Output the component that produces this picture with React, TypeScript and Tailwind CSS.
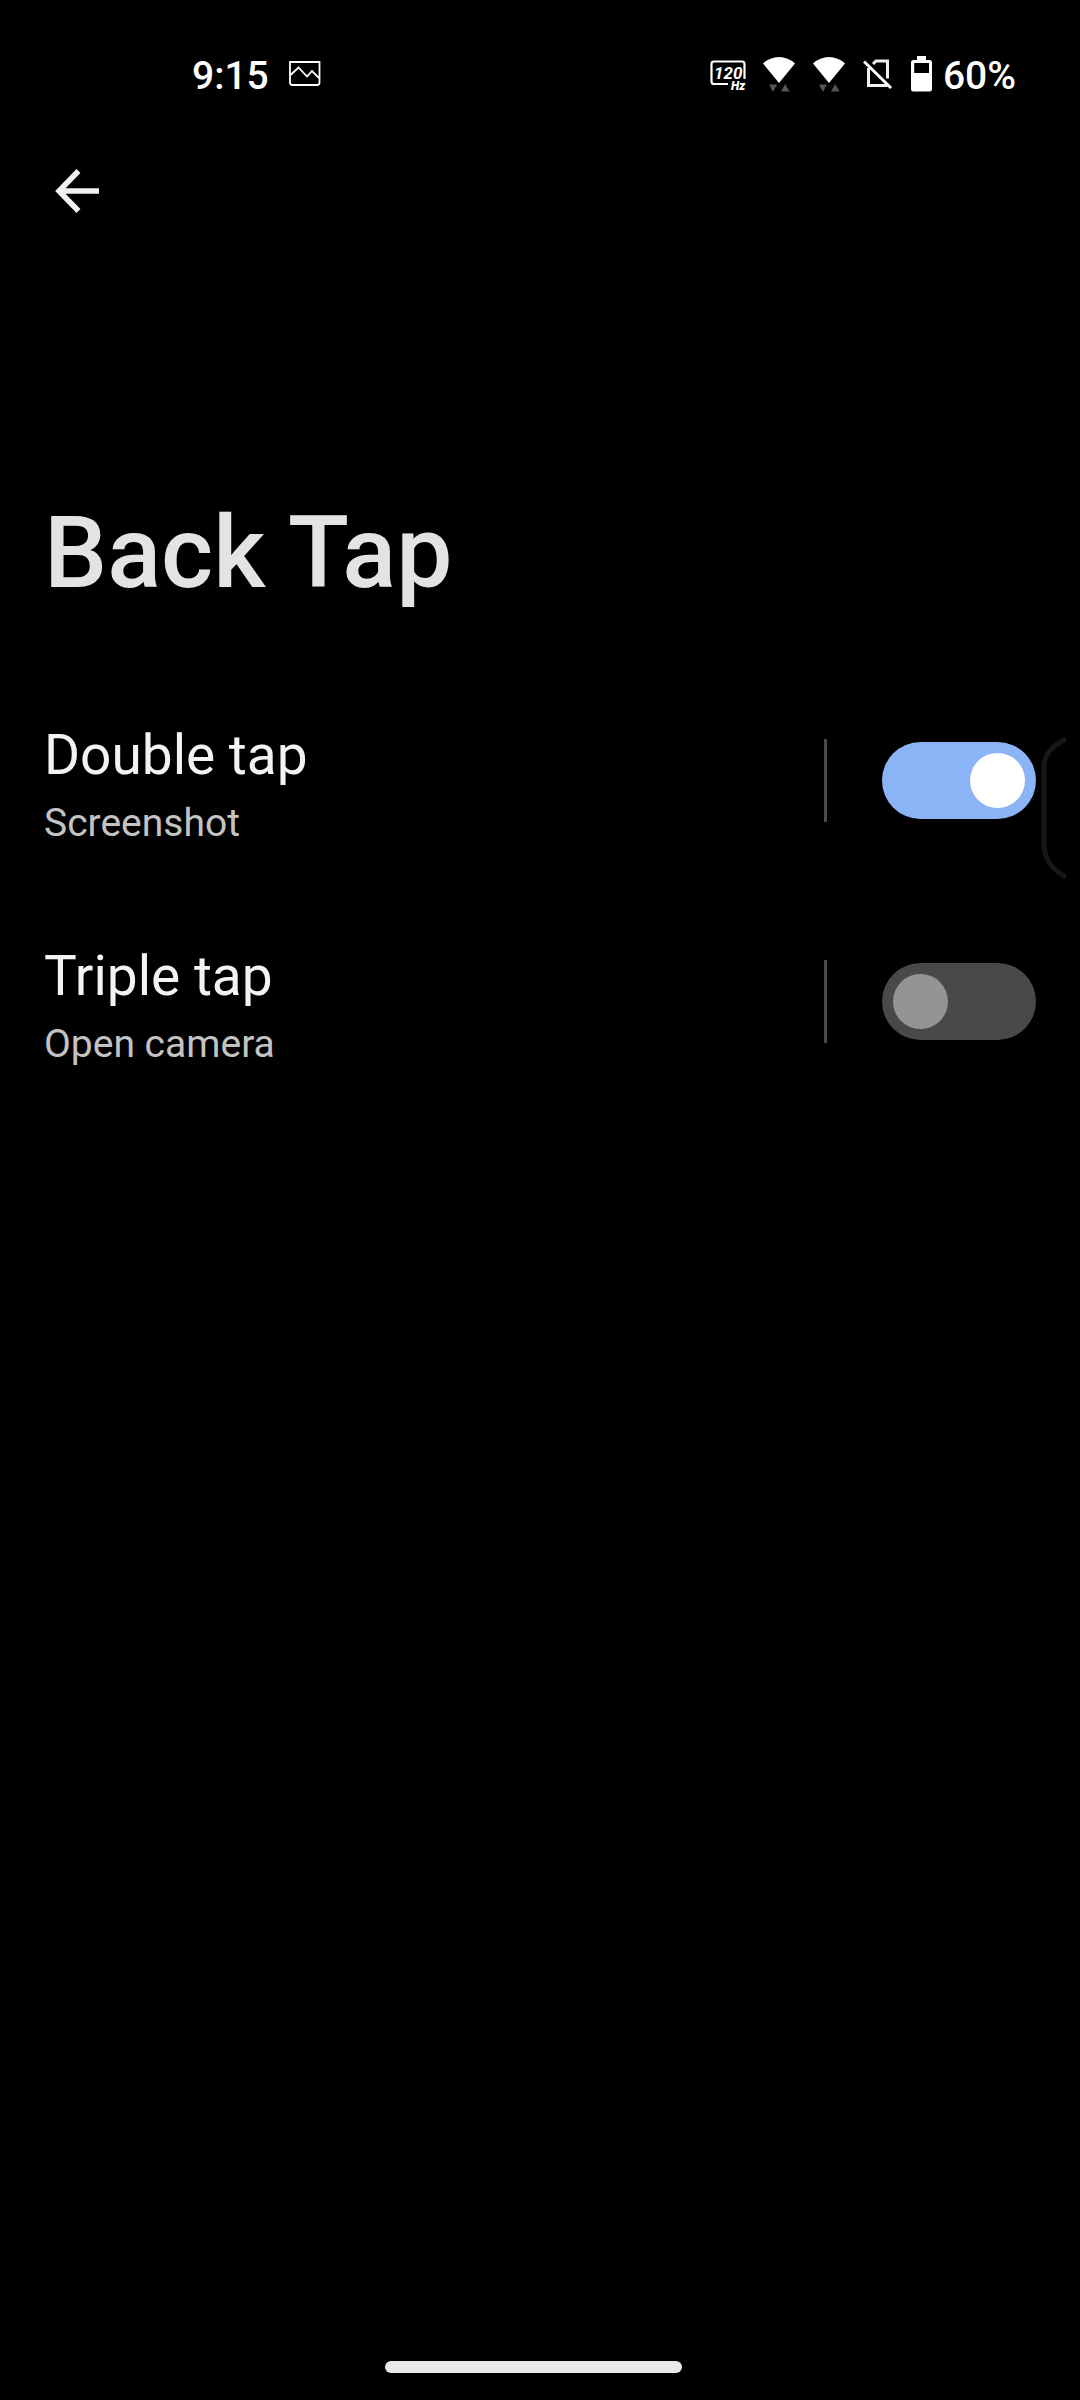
import { useState } from "react";

function PictureIcon() {
  return (
    <svg width="32" height="26" viewBox="0 0 32 26" fill="none" aria-hidden="true">
      <path d="M1 1H30.5V21.5Q30.5 24 28 24H3.500Q1 24 1 21.500Z" stroke="#fff" strokeWidth="1.8" />
      <path d="M1.500 14L9.500 6.500L18 15.500L23 10L30 17" stroke="#fff" strokeWidth="1.8" />
    </svg>
  );
}

function RefreshRateIcon() {
  return (
    <svg width="37" height="36" viewBox="0 0 37 36" fill="none" aria-hidden="true">
      <path d="M18 28H4Q1.500 28 1.500 25.500V8Q1.500 5.500 4 5.500H32Q34.500 5.500 34.500 8V23" stroke="#fff" strokeWidth="2.2" />
      <text x="4" y="23" className="fill-white font-['Roboto',sans-serif] text-[17px] font-bold italic">120</text>
      <text x="21" y="34" className="fill-white font-['Roboto',sans-serif] text-[12px] font-black italic">Hz</text>
    </svg>
  );
}

function WifiIcon() {
  return (
    <svg width="34" height="36" viewBox="1 0 34 36" aria-hidden="true">
      <path d="M1 7.500Q8 1 17 1T33 7.500L17 27Z" fill="#fff" />
      <path d="M7 28.500H15L11 36ZM19 35.500H27.500L23.200 28Z" fill="#555" />
    </svg>
  );
}

function NoSimIcon() {
  return (
    <svg width="30" height="36" viewBox="0 0 30 36" fill="none" aria-hidden="true">
      <path d="M10 8L13 5H24.500V22.500M5.500 12V29.500H24.500" stroke="#f0f0f0" strokeWidth="3" />
      <path d="M1 5.500L28 32" stroke="#fff" strokeWidth="3" />
    </svg>
  );
}

function BatteryIcon() {
  return (
    <svg width="21" height="36" viewBox="0 0 21 36" aria-hidden="true">
      <path
        fillRule="evenodd"
        fill="#fff"
        d="M6 0H15V4H18.500Q21 4 21 6.500V33Q21 35.500 18.500 35.500H2.500Q0 35.500 0 33V6.500Q0 4 2.500 4H6ZM3.200 7V17H18V7Z"
      />
    </svg>
  );
}

function BackArrow() {
  return (
    <svg width="46" height="46" viewBox="0 0 46 46" fill="none" aria-hidden="true">
      <path d="M24.500 3L5 23L24.500 43M5 23H45" stroke="#f1f1f1" strokeWidth="5.500" />
    </svg>
  );
}

type RowProps = { id: string; title: string; action: string; initial: boolean };

function GestureRow({ id, title, action, initial }: RowProps) {
  const [on, setOn] = useState(initial);
  return (
    <li className="flex h-[221px] items-center">
      <button type="button" className="min-w-0 flex-1 pt-2 text-left">
        <span id={id} className="block text-[55px] leading-[64px] text-[#f3f3f3]">{title}</span>
        <span className="mt-3 block text-[39px] leading-[48px] text-[#c3c3c3]">{action}</span>
      </button>
      <span className="mr-[55px] h-[83px] w-[3px] bg-[#4b4b4b]" />
      <input
        type="checkbox"
        role="switch"
        aria-labelledby={id}
        checked={on}
        onChange={(e) => setOn(e.target.checked)}
        className="flex h-[77px] w-[154px] cursor-pointer appearance-none items-center rounded-full bg-[#494949] p-[11px] before:size-[55px] before:rounded-full before:bg-[#949494] before:content-[''] checked:justify-end checked:bg-[#8ab4f6] checked:before:bg-white"
      />
    </li>
  );
}

export default function App() {
  return (
    <div className="relative flex min-h-screen flex-col bg-black pr-[13px] font-['Roboto',sans-serif] text-white">
      <header className="flex h-[148px] items-center justify-between pl-[192px] pr-[51px] text-[39px] font-medium">
        <div className="flex items-center gap-[20px]">
          <time className="pt-1">9:15</time>
          <PictureIcon />
        </div>
        <div className="flex items-center">
          <div className="flex items-center gap-4">
            <RefreshRateIcon />
            <WifiIcon />
            <WifiIcon />
            <NoSimIcon />
          </div>
          <div className="ml-[18px] flex items-center gap-[11px]">
            <BatteryIcon />
            <span className="pt-1">60%</span>
          </div>
        </div>
      </header>
      <nav className="flex h-[86px] items-center pl-[54px]">
        <button type="button" aria-label="Back">
          <BackArrow />
        </button>
      </nav>
      <main className="flex-1 pl-[44px] pr-[31px]">
        <h1 className="mt-[259px] text-[100px] leading-[120px] font-medium text-[#e3e3e3]">Back Tap</h1>
        <ul className="mt-[57px]">
          <GestureRow id="double-tap" title="Double tap" action="Screenshot" initial={true} />
          <GestureRow id="triple-tap" title="Triple tap" action="Open camera" initial={false} />
        </ul>
      </main>
      <footer className="flex justify-center pb-[27px]">
        <div className="h-[12px] w-[297px] rounded-full bg-[#e9e9e9]" />
      </footer>
      <svg className="absolute top-[736px] right-[13px]" width="26" height="146" viewBox="0 0 26 146" fill="none" aria-hidden="true">
        <path d="M25 3C11 10 3 18 3 31V108C3 122 11 134 25 141" stroke="#171717" strokeWidth="5" />
      </svg>
    </div>
  );
}
